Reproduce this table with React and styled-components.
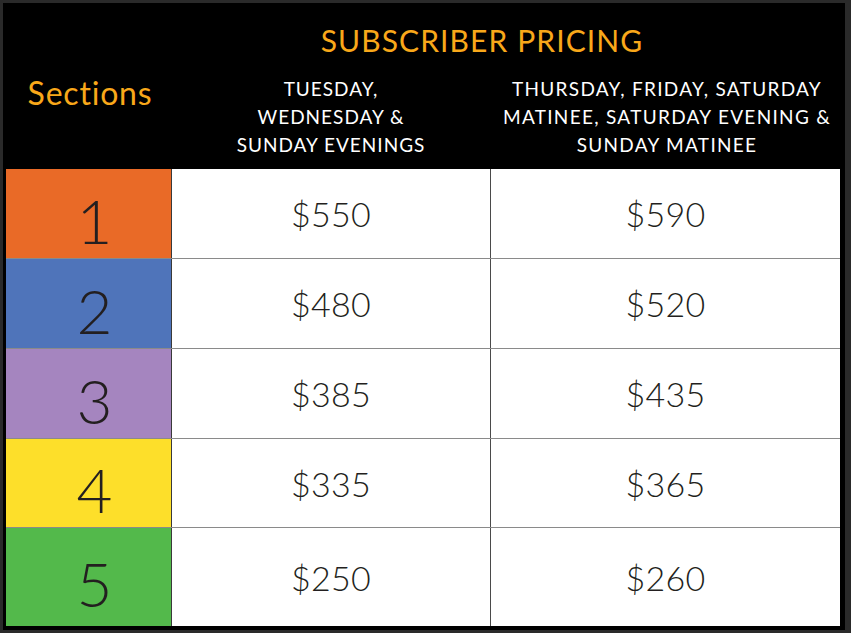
import React from "react";
import styled, { createGlobalStyle } from "styled-components";

const GlobalStyle = createGlobalStyle`
    html, body {
        margin: 0;
        padding: 0;
        background: #2a2a2a;
    }
    * {
        box-sizing: border-box;
    }
`;

const Frame = styled.div`
    width: 851px;
    height: 633px;
    padding: 3px 6px 3px 3px;
    background: #2a2a2a;
`;

const Board = styled.div`
    height: 100%;
    background: #000;
    padding: 0 5px 4px 3px;
    display: flex;
    flex-direction: column;
    font-family: Lato, "Open Sans", sans-serif;
`;

const Header = styled.div`
    height: 166px;
    display: grid;
    grid-template-columns: 166px 318px 350px;
    grid-template-rows: 66px 1fr;
`;

const SectionsLabel = styled.div`
    grid-row: 1 / span 2;
    display: flex;
    align-items: center;
    justify-content: center;
    padding: 12px 0 0 2px;
    color: #f9a81a;
    font-size: 32px;
    font-weight: 400;
    letter-spacing: 0.8px;
`;

const Title = styled.div`
    grid-column: 2 / span 2;
    display: flex;
    justify-content: center;
    align-items: center;
    padding: 8px 48px 0 0;
    color: #f9a81a;
    font-size: 30px;
    font-weight: 400;
    letter-spacing: 1.1px;
`;

const DayHead = styled.div`
    text-align: center;
    color: #fff;
    font-size: 19px;
    line-height: 28px;
    letter-spacing: ${(p) => (p.$wide ? "1.3px" : "1px")};
    text-transform: uppercase;
    padding: 6px 0 0 ${(p) => (p.$wide ? "4px" : "0")};
`;

const Row = styled.div`
    height: ${(p) => p.$h}px;
    display: grid;
    grid-template-columns: 166px 318px 350px;
    border-top: ${(p) => (p.$first ? "none" : "1px solid #8a8a8a")};
`;

const SectionCell = styled.div`
    background: ${(p) => p.$color};
    border-right: 1px solid #3a3a3a;
    display: flex;
    align-items: center;
    justify-content: center;
    padding: 12px 0 0 12px;
    color: #231f20;
    font-size: 62px;
    font-weight: 300;
    line-height: 1;
`;

const PriceCell = styled.div`
    background: #fff;
    border-left: ${(p) => (p.$divider ? "1px solid #4a4a4a" : "none")};
    display: flex;
    align-items: center;
    justify-content: center;
    color: #231f20;
    font-size: 34px;
    font-weight: 300;
    letter-spacing: 0.3px;
`;

const rows = [
    { n: 1, color: "#e96a27", h: 89, a: "$550", b: "$590" },
    { n: 2, color: "#4f74ba", h: 90, a: "$480", b: "$520" },
    { n: 3, color: "#a585bf", h: 90, a: "$385", b: "$435" },
    { n: 4, color: "#fddf2a", h: 89, a: "$335", b: "$365" },
    { n: 5, color: "#53b94b", h: 99, a: "$250", b: "$260" },
];

export default function App() {
    return (
        <>
            <GlobalStyle />
            <Frame>
                <Board>
                    <Header>
                        <SectionsLabel>Sections</SectionsLabel>
                        <Title>SUBSCRIBER PRICING</Title>
                        <DayHead>
                            Tuesday,
                            <br />
                            Wednesday &amp;
                            <br />
                            Sunday Evenings
                        </DayHead>
                        <DayHead $wide>
                            Thursday, Friday, Saturday
                            <br />
                            Matinee, Saturday Evening &amp;
                            <br />
                            Sunday Matinee
                        </DayHead>
                    </Header>
                    {rows.map((r, i) => (
                        <Row key={r.n} $h={r.h} $first={i === 0}>
                            <SectionCell $color={r.color}>{r.n}</SectionCell>
                            <PriceCell>{r.a}</PriceCell>
                            <PriceCell $divider>{r.b}</PriceCell>
                        </Row>
                    ))}
                </Board>
            </Frame>
        </>
    );
}
